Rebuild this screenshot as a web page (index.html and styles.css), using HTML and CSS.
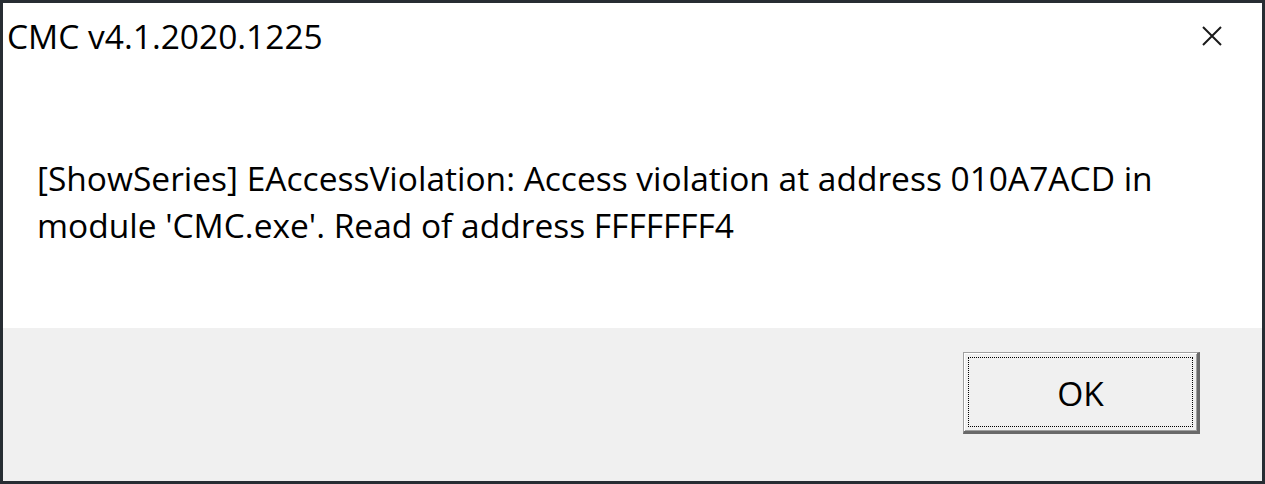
FILE: index.html
```html
<!DOCTYPE html>
<html lang="en">
<head>
<meta charset="utf-8">
<title>CMC v4.1.2020.1225</title>
<link rel="stylesheet" href="styles.css">
</head>
<body>
<div class="window">
  <div class="titlebar">
    <span class="title">CMC v4.1.2020.1225</span>
    <button class="close" aria-label="Close">
      <svg width="20" height="20" viewBox="0 0 20 20"><path d="M1 1 L19 19 M19 1 L1 19" stroke="#1a1a1a" stroke-width="2" fill="none"/></svg>
    </button>
  </div>
  <div class="content">
    <p class="message">[ShowSeries] EAccessViolation: Access violation at address 010A7ACD in<br>module 'CMC.exe'. Read of address FFFFFFF4</p>
  </div>
  <div class="footer">
    <button class="ok"><span class="focus">OK</span></button>
  </div>
</div>
</body>
</html>
```

FILE: styles.css
```css
html, body {
  margin: 0;
  padding: 0;
}
body {
  width: 1265px;
  height: 484px;
  background: #272d33;
  font-family: "Open Sans", "Noto Sans", "Liberation Sans", sans-serif;
  color: #000;
  overflow: hidden;
}
.window {
  margin: 3px 0 0 3px;
  width: 1259px;
  height: 478px;
  background: #fff;
  display: flex;
  flex-direction: column;
}
.titlebar {
  height: 72px;
  display: flex;
  align-items: center;
  justify-content: space-between;
  padding-left: 4px;
}
.title {
  font-size: 33.5px;
  margin-top: -7px;
}
.close {
  width: 100px;
  height: 64px;
  border: 0;
  background: transparent;
  display: flex;
  align-items: center;
  justify-content: center;
  padding: 0;
  margin-top: -6px;
}
.content {
  height: 253px;
  padding-left: 34px;
}
.message {
  margin: 0;
  padding-top: 80px;
  font-size: 33.5px;
  line-height: 47px;
}
.footer {
  flex: 1;
  background: #f0f0f0;
  display: flex;
  justify-content: flex-end;
  align-items: flex-start;
  padding-top: 24px;
  padding-right: 62px;
}
.ok {
  width: 237px;
  height: 82px;
  box-sizing: border-box;
  background: #f0f0f0;
  border-style: solid;
  border-width: 1px 3px 3px 1px;
  border-color: #a0a0a0 #696969 #696969 #a0a0a0;
  box-shadow: inset 1px 1px 0 #fff, inset -1px -1px 0 #a0a0a0;
  padding: 4px;
  display: flex;
  font-family: inherit;
}
.focus {
  flex: 1;
  border: 1px dotted #000;
  display: flex;
  align-items: center;
  justify-content: center;
  font-size: 33.5px;
  color: #000;
  padding-top: 2px;
}
```
